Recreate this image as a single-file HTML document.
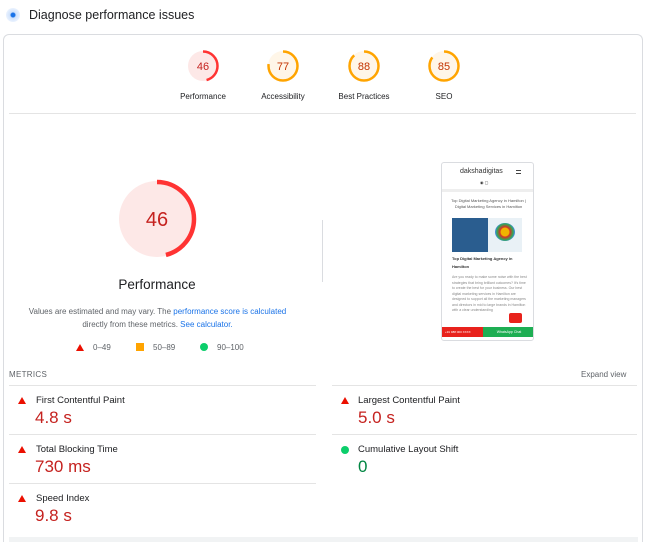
<!DOCTYPE html>
<html style="width:650px;height:542px;overflow:hidden"><head><meta charset="utf-8"><style>
*{margin:0;padding:0;box-sizing:border-box}
body{width:650px;height:542px;background:#fff;font-family:"Liberation Sans",sans-serif;position:relative;overflow:hidden;color:#202124}
.a{position:absolute}
.lbl{font-size:8px;color:#202124;text-align:center;width:80px}
.mname{font-size:9.5px;color:#202124}
.mval{font-size:17px;color:#c5221f}
.sep{height:1px;background:#e4e4e4}
.tri{width:0;height:0;border-left:4px solid transparent;border-right:4px solid transparent;border-bottom:7px solid #eb0f00}
</style></head><body>
<div class="a" style="left:6px;top:8px;width:14px;height:14px;border-radius:50%;background:radial-gradient(circle,#1a73e8 0 2px,#cfe2fc 3px,#eaf2fe 7px)"></div>
<div class="a" style="left:29px;top:8px;font-size:12.5px;color:#202124">Diagnose performance issues</div>
<div class="a" style="left:3px;top:34px;width:640px;height:508px;border:1px solid #dadce0;border-bottom:none;border-radius:6px 6px 0 0"></div>

<svg class="a" style="left:0;top:0" width="650" height="542">
 <g fill="none" stroke-width="2.5">
  <circle cx="203" cy="66" r="15" fill="#fde8e7" stroke="none"/>
  <circle cx="203" cy="66" r="14.5" stroke="#ff3333" stroke-dasharray="41.9 91" transform="rotate(-90 203 66)"/>
  <circle cx="283" cy="66" r="15" fill="#fff6e8" stroke="none"/>
  <circle cx="283" cy="66" r="14.5" stroke="#ffa400" stroke-dasharray="70.2 91" transform="rotate(-90 283 66)"/>
  <circle cx="364" cy="66" r="15" fill="#fff6e8" stroke="none"/>
  <circle cx="364" cy="66" r="14.5" stroke="#ffa400" stroke-dasharray="80.2 91" transform="rotate(-90 364 66)"/>
  <circle cx="444" cy="66" r="15" fill="#fff6e8" stroke="none"/>
  <circle cx="444" cy="66" r="14.5" stroke="#ffa400" stroke-dasharray="77.4 91" transform="rotate(-90 444 66)"/>
  <circle cx="157" cy="219" r="38" fill="#fde8e7" stroke="none"/>
  <circle cx="157" cy="219" r="37" stroke="#ff3333" stroke-width="4.5" stroke-dasharray="107 233" transform="rotate(-90 157 219)"/>
 </g>
 <g font-family="Liberation Sans" text-anchor="middle">
  <text x="203" y="70" font-size="11" fill="#c5221f">46</text>
  <text x="283" y="70" font-size="11" fill="#c33300">77</text>
  <text x="364" y="70" font-size="11" fill="#c33300">88</text>
  <text x="444" y="70" font-size="11" fill="#c33300">85</text>
  <text x="157" y="226" font-size="20" fill="#c5221f">46</text>
 </g>
</svg>
<div class="a lbl" style="left:163px;top:92px">Performance</div>
<div class="a lbl" style="left:243px;top:92px">Accessibility</div>
<div class="a lbl" style="left:324px;top:92px">Best Practices</div>
<div class="a lbl" style="left:404px;top:92px">SEO</div>
<div class="a sep" style="left:9px;top:113px;width:627px"></div>

<div class="a" style="left:57px;top:277px;width:200px;text-align:center;font-size:13.5px;color:#202124">Performance</div>
<div class="a" style="left:20px;top:305px;width:275px;text-align:center;font-size:8px;line-height:13px;color:#5f6368">Values are estimated and may vary. The <span style="color:#1a73e8">performance score is calculated</span> directly from these metrics. <span style="color:#1a73e8">See calculator.</span></div>
<div class="a tri" style="left:76px;top:344px"></div>
<div class="a" style="left:93px;top:343px;font-size:8px;color:#5f6368">0–49</div>
<div class="a" style="left:136px;top:343px;width:8px;height:8px;background:#ffa400"></div>
<div class="a" style="left:153px;top:343px;font-size:8px;color:#5f6368">50–89</div>
<div class="a" style="left:200px;top:343px;width:8px;height:8px;border-radius:50%;background:#0cce6b"></div>
<div class="a" style="left:217px;top:343px;font-size:8px;color:#5f6368">90–100</div>

<div class="a" style="left:322px;top:220px;width:1px;height:62px;background:#dadce0"></div>

<div class="a" style="left:441px;top:162px;width:93px;height:179px;border:1px solid #dadce0;border-radius:3px;background:#fff;overflow:hidden">
 <div class="a" style="left:18px;top:5px;font-size:7px;color:#333">dakshadigitas</div>
 <div class="a" style="left:74px;top:7px;width:5px;height:4px;border-top:1px solid #444;border-bottom:1px solid #444"></div>
 <div class="a" style="left:38px;top:17px;font-size:4px;color:#333">◉ ▢</div>
 <div class="a" style="left:0;top:26px;width:93px;height:3px;background:#eee"></div>
 <div class="a" style="left:8px;top:35px;width:77px;font-size:4px;line-height:5.5px;text-align:center;color:#555">Top Digital Marketing Agency in Hamilton | Digital Marketing Services in Hamilton</div>
 <div class="a" style="left:10px;top:55px;width:36px;height:34px;background:#2a5d8f"></div>
 <div class="a" style="left:46px;top:55px;width:34px;height:34px;background:#e9f1f6"></div>
 <div class="a" style="left:53px;top:60px;width:20px;height:18px;border-radius:50%;background:radial-gradient(circle,#f0b400 0 4px,#d93025 5px,#34a853 8px,#4285f4 10px)"></div>
 <div class="a" style="left:10px;top:92px;width:75px;font-size:4px;line-height:8px;font-weight:bold;color:#333">Top Digital Marketing Agency in Hamilton</div>
 <div class="a" style="left:10px;top:112px;width:75px;font-size:3.5px;line-height:5.5px;color:#888">Are you ready to make some noise with the best strategies that bring brilliant outcomes? It's time to create the best for your business. Our best digital marketing services in Hamilton are designed to support all the marketing managers and directors in mid to large brands in Hamilton with a clear understanding</div>
 <div class="a" style="left:0;top:164px;width:41px;height:10px;background:#e8221c;font-size:3px;color:#fff;line-height:10px;padding-left:3px">+91 988 000 XXXX</div>
 <div class="a" style="left:41px;top:164px;width:52px;height:10px;background:#1eae53;font-size:3.5px;color:#fff;line-height:10px;text-align:center">WhatsApp Chat</div>
 <div class="a" style="left:67px;top:150px;width:13px;height:10px;background:#e8221c;border-radius:2px"></div>
</div>

<div class="a" style="left:9px;top:370px;font-size:8px;color:#5f6368;letter-spacing:.3px">METRICS</div>
<div class="a" style="left:581px;top:370px;font-size:8px;color:#5f6368">Expand view</div>
<div class="a sep" style="left:9px;top:385px;width:307px"></div>
<div class="a sep" style="left:332px;top:385px;width:305px"></div>

<div class="a tri" style="left:18px;top:397px"></div>
<div class="a mname" style="left:36px;top:395px">First Contentful Paint</div>
<div class="a mval" style="left:35px;top:408px">4.8 s</div>
<div class="a tri" style="left:341px;top:397px"></div>
<div class="a mname" style="left:358px;top:395px">Largest Contentful Paint</div>
<div class="a mval" style="left:358px;top:408px">5.0 s</div>
<div class="a sep" style="left:9px;top:434px;width:307px"></div>
<div class="a sep" style="left:332px;top:434px;width:305px"></div>

<div class="a tri" style="left:18px;top:446px"></div>
<div class="a mname" style="left:36px;top:444px">Total Blocking Time</div>
<div class="a mval" style="left:35px;top:457px">730 ms</div>
<div class="a" style="left:341px;top:446px;width:8px;height:8px;border-radius:50%;background:#0cce6b"></div>
<div class="a mname" style="left:358px;top:444px">Cumulative Layout Shift</div>
<div class="a mval" style="left:358px;top:457px;color:#018642">0</div>
<div class="a sep" style="left:9px;top:483px;width:307px"></div>

<div class="a tri" style="left:18px;top:495px"></div>
<div class="a mname" style="left:36px;top:493px">Speed Index</div>
<div class="a mval" style="left:35px;top:506px">9.8 s</div>
<div class="a" style="left:9px;top:537px;width:629px;height:5px;background:#f1f3f4"></div>
</body></html>
